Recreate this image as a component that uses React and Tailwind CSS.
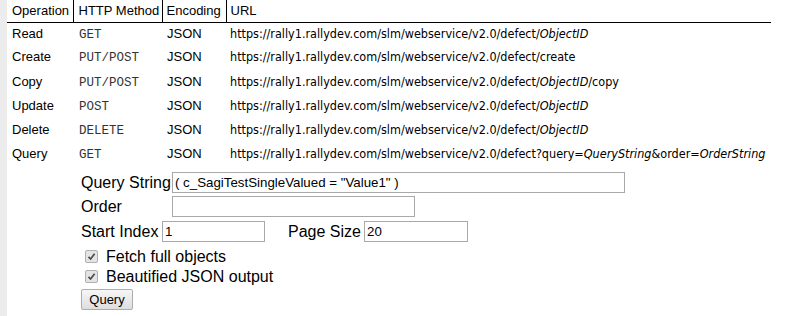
const ROWS = [
  { op: "Read", method: "GET", url: [["https://rally1.rallydev.com/slm/webservice/v2.0/defect/"], ["ObjectID", true]] },
  { op: "Create", method: "PUT/POST", url: [["https://rally1.rallydev.com/slm/webservice/v2.0/defect/create"]] },
  { op: "Copy", method: "PUT/POST", url: [["https://rally1.rallydev.com/slm/webservice/v2.0/defect/"], ["ObjectID", true], ["/copy"]] },
  { op: "Update", method: "POST", url: [["https://rally1.rallydev.com/slm/webservice/v2.0/defect/"], ["ObjectID", true]] },
  { op: "Delete", method: "DELETE", url: [["https://rally1.rallydev.com/slm/webservice/v2.0/defect/"], ["ObjectID", true]] },
  {
    op: "Query",
    method: "GET",
    url: [
      ["https://rally1.rallydev.com/slm/webservice/v2.0/defect?query="],
      ["QueryString", true],
      ["&order="],
      ["OrderString", true]
    ]
  }
];

const sans = "font-['Liberation_Sans',Arial,sans-serif]";
const inputCls =
  "h-[21px] border border-[#a9a9a9] bg-white px-[2px] text-[13.3px] text-black outline-none font-['Liberation_Sans',Arial,sans-serif]";

function Check({ label }) {
  return (
    <label className="flex h-[20px] items-center">
      <span className="ml-[4px] mr-[8px] flex h-[13px] w-[13px] items-center justify-center rounded-[2px] border border-[#b0b0b0] bg-[#e4e4e4]">
        <svg width="9" height="9" viewBox="0 0 9 9">
          <path d="M1.5 4.8 L3.6 7 L7.6 1.8" fill="none" stroke="#4a4a4a" strokeWidth="1.7" />
        </svg>
      </span>
      <span className="text-[16px] text-black">{label}</span>
    </label>
  );
}

export default function App() {
  return (
    <main className={`flex h-[316px] w-[789px] overflow-hidden bg-white ${sans}`}>
      <div className="h-full w-[7px] shrink-0 bg-[#ececec]" />
      <section className="w-[764px]">
        <table className="w-full border-collapse text-[13px] text-black">
          <thead>
            <tr className="h-[22px] border-b border-black">
              <th className="w-[66px] border-r border-black pl-[5px] text-left font-normal">Operation</th>
              <th className="w-[89px] border-r border-black pl-[5px] text-left font-normal">HTTP Method</th>
              <th className="w-[64px] border-r border-black pl-[4px] text-left font-normal">Encoding</th>
              <th className="pl-[4px] text-left font-normal">URL</th>
            </tr>
          </thead>
          <tbody>
            {ROWS.map((row, i) => (
              <tr key={row.op} className={i % 2 === 0 ? "h-[24px]" : "h-[24.5px]"}>
                <td className="pl-[5px] pt-[1px] align-baseline">{row.op}</td>
                <td className="pl-[6px] pt-[1px] align-baseline font-['Liberation_Mono','Courier_New',monospace] text-[12.5px] text-[#333]">
                  {row.method}
                </td>
                <td className="pl-[5px] pt-[1px] align-baseline">JSON</td>
                <td className="whitespace-nowrap pl-[4px] pt-[1px] align-baseline font-['DejaVu_Sans_Condensed','DejaVu_Sans',sans-serif] text-[12.5px]">
                  {row.url.map(([text, italic], j) =>
                    italic ? (
                      <i key={j}>{text}</i>
                    ) : (
                      <span key={j}>{text}</span>
                    )
                  )}
                </td>
              </tr>
            ))}
          </tbody>
        </table>

        <div className="ml-[74px] mt-[4px] text-[16px] text-black">
          <div className="flex h-[22px] items-center">
            <span className="w-[91px]">Query String</span>
            <input className={`${inputCls} w-[453px]`} defaultValue={'( c_SagiTestSingleValued = "Value1" )'} />
          </div>
          <div className="mt-[2px] flex h-[22px] items-center">
            <span className="w-[91px]">Order</span>
            <input className={`${inputCls} w-[243px]`} defaultValue="" />
          </div>
          <div className="mt-[3px] flex h-[22px] items-center">
            <span className="w-[81px]">Start Index</span>
            <input className={`${inputCls} w-[103px]`} defaultValue="1" />
            <span className="ml-[23px] w-[76px]">Page Size</span>
            <input className={`${inputCls} w-[104px]`} defaultValue="20" />
          </div>
          <div className="mt-[4px]">
            <Check label="Fetch full objects" />
            <Check label="Beautified JSON output" />
          </div>
          <button className="mt-[1px] h-[21px] w-[52px] rounded-[2px] border border-[#adadad] bg-gradient-to-b from-[#f6f6f6] to-[#dedede] text-[13px] text-black">
            Query
          </button>
        </div>
      </section>
    </main>
  );
}
